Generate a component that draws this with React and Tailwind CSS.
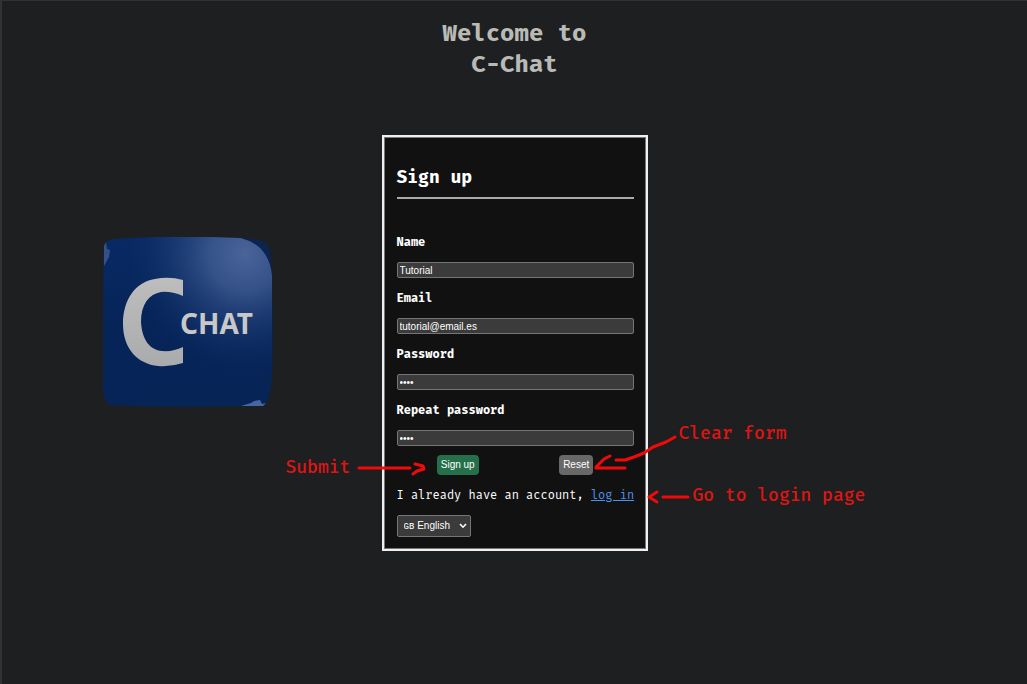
import { useId } from "react";

const fields = [
  { label: "Name", type: "text", value: "Tutorial" },
  { label: "Email", type: "email", value: "tutorial@email.es" },
  { label: "Password", type: "password", value: "1234" },
  { label: "Repeat password", type: "password", value: "1234" },
];

function Field({ label, type, value }) {
  const id = useId();
  return (
    <div className="flex flex-col gap-3">
      <label htmlFor={id} className="text-xs leading-4 font-bold">
        {label}
      </label>
      <input
        id={id}
        type={type}
        defaultValue={value}
        className="h-4 w-full rounded-xs border border-[#757575] bg-[#3b3b3b] px-0.5 font-['Liberation_Sans',sans-serif] text-[10px] leading-3 text-white"
      />
    </div>
  );
}

function Logo() {
  return (
    <svg viewBox="0 0 170 170" className="size-[170px]" role="img" aria-label="C-Chat">
      <defs>
        <linearGradient id="base" x1="0" y1="0" x2="0.2" y2="1">
          <stop offset="0" stopColor="#082a65" />
          <stop offset="0.5" stopColor="#062458" />
          <stop offset="1" stopColor="#062456" />
        </linearGradient>
        <radialGradient id="shine" cx="0.84" cy="0.1" r="0.72">
          <stop offset="0" stopColor="#4a6498" />
          <stop offset="0.3" stopColor="#405d94" stopOpacity="0.8" />
          <stop offset="0.65" stopColor="#24447f" stopOpacity="0.4" />
          <stop offset="1" stopColor="#0a2860" stopOpacity="0" />
        </radialGradient>
        <linearGradient id="letter" x1="0" y1="0" x2="0" y2="1">
          <stop offset="0" stopColor="#bdbdbd" />
          <stop offset="1" stopColor="#aaabad" />
        </linearGradient>
      </defs>
      <path
        d="M1 9Q3 3 11 2Q70-2 138 1L156 3Q165 5 167 14Q171 80 169 138Q168 158 163 166Q155 170 126 169Q65 171 7 168Q1 166 0 150Q-1 80 1 9Z"
        fill="url(#base)"
      />
      <path
        d="M11 2Q70-2 138 1Q166 8 169 38V138Q168 158 163 166Q155 170 126 169Q65 171 7 168Q1 166 0 150Q-1 80 1 9Q3 3 11 2Z"
        fill="url(#shine)"
      />
      <path d="M138 1L156 3Q165 5 167 14L169 38Q166 8 138 1Z" fill="#0b2450" />
      <path d="M1 29V9L3 5L4 12L7 13L6 20Z" fill="#365187" />
      <path d="M138 169L148 166L151 164L157 163L159 167L163 166L160 169Z" fill="#4667a3" />
      <path
        d="M80 43Q66 39 52 42C32 45 20 63 20 87C20 112 35 127 55 129Q68 130 80 126V110Q70 115 59 114C47 113 39 103 38 85C38 67 46 57 58 55Q68 54 80 59Z"
        fill="url(#letter)"
      />
      <text
        x="77"
        y="97"
        fill="#c8c8c8"
        className="font-['Noto_Sans',sans-serif] text-[28px] font-bold"
      >
        CHAT
      </text>
    </svg>
  );
}

function Note({ className, children }) {
  return (
    <span
      className={`absolute text-lg leading-6 font-medium whitespace-nowrap text-[#dc1515] ${className}`}
    >
      {children}
    </span>
  );
}

function Annotations() {
  return (
    <div className="pointer-events-none absolute inset-0">
      <Note className="-left-24 top-80">Submit</Note>
      <Note className="left-[297px] top-[286px]">Clear form</Note>
      <Note className="left-[311px] top-[348px]">Go to login page</Note>
      <svg
        viewBox="0 0 350 90"
        className="absolute -left-8 top-[287px] h-[90px] w-[350px]"
        fill="none"
        stroke="#f20a0a"
        strokeWidth="3"
        strokeLinecap="round"
        strokeLinejoin="round"
        aria-hidden="true"
      >
        <path d="M9 46H60M65 42L73 44L74 47L67 49L63 52" />
        <path d="M325 15L316 20L303 25L294 31L284 35L275 38L266 38M260 34L254 37L246 45V46H275" />
        <path d="M338 75H313M307 70L299 75L307 80" />
      </svg>
    </div>
  );
}

function SignUpForm() {
  return (
    <form
      className="border-2 border-[#f0f0f0] bg-[#111111] pt-7 pr-3 pb-3 pl-[13px] text-white inset-shadow-[0_0_0_1px_#777777]"
      onSubmit={(event) => event.preventDefault()}
    >
      <h2 className="border-b-2 border-[#aaaaaa] pb-2 text-lg leading-6 font-bold">Sign up</h2>
      <div className="mt-[35px] flex flex-col gap-3">
        {fields.map((field) => (
          <Field key={field.label} {...field} />
        ))}
      </div>
      <div className="mt-[9px] flex justify-around font-['Liberation_Sans',sans-serif] text-[10px] leading-3">
        <button type="submit" className="h-5 rounded-sm bg-[#25704a] px-1">
          Sign up
        </button>
        <button type="reset" className="h-5 rounded-sm bg-[#686868] px-1">
          Reset
        </button>
      </div>
      <p className="mt-3 text-xs leading-4 whitespace-nowrap">
        I already have an account,{" "}
        <a href="#login" className="text-[#4f91e8] underline">
          log in
        </a>
      </p>
      <div className="relative mt-3 w-[74px] font-['Liberation_Sans',sans-serif] text-[10px]">
        <select
          aria-label="Language"
          className="block h-[22px] w-full appearance-none rounded-xs border border-[#757575] bg-[#3b3b3b] pl-1.5 leading-3 text-white"
        >
          <option>ɢʙ English</option>
        </select>
        <svg
          viewBox="0 0 8 6"
          className="pointer-events-none absolute top-2 right-1 h-1.5 w-2"
          fill="none"
          stroke="white"
          strokeWidth="1.6"
          aria-hidden="true"
        >
          <path d="M1 1L4 4.2L7 1" />
        </svg>
      </div>
    </form>
  );
}

export default function App() {
  return (
    <div className="min-h-screen overflow-x-hidden border-t border-l-2 border-t-[#303234] border-l-[#303234] bg-[#1d1f20] pt-[17px] font-['Fira_Mono','DejaVu_Sans_Mono',monospace]">
      <h1 className="text-center text-2xl leading-[31px] font-bold text-[#b9bab6]">
        Welcome to
        <br />
        C-Chat
      </h1>
      <main className="mt-[55px] grid grid-cols-[1fr_266px_1fr]">
        <div className="flex items-center justify-center pr-2 pb-[42px]">
          <Logo />
        </div>
        <div className="relative">
          <SignUpForm />
          <Annotations />
        </div>
      </main>
    </div>
  );
}
